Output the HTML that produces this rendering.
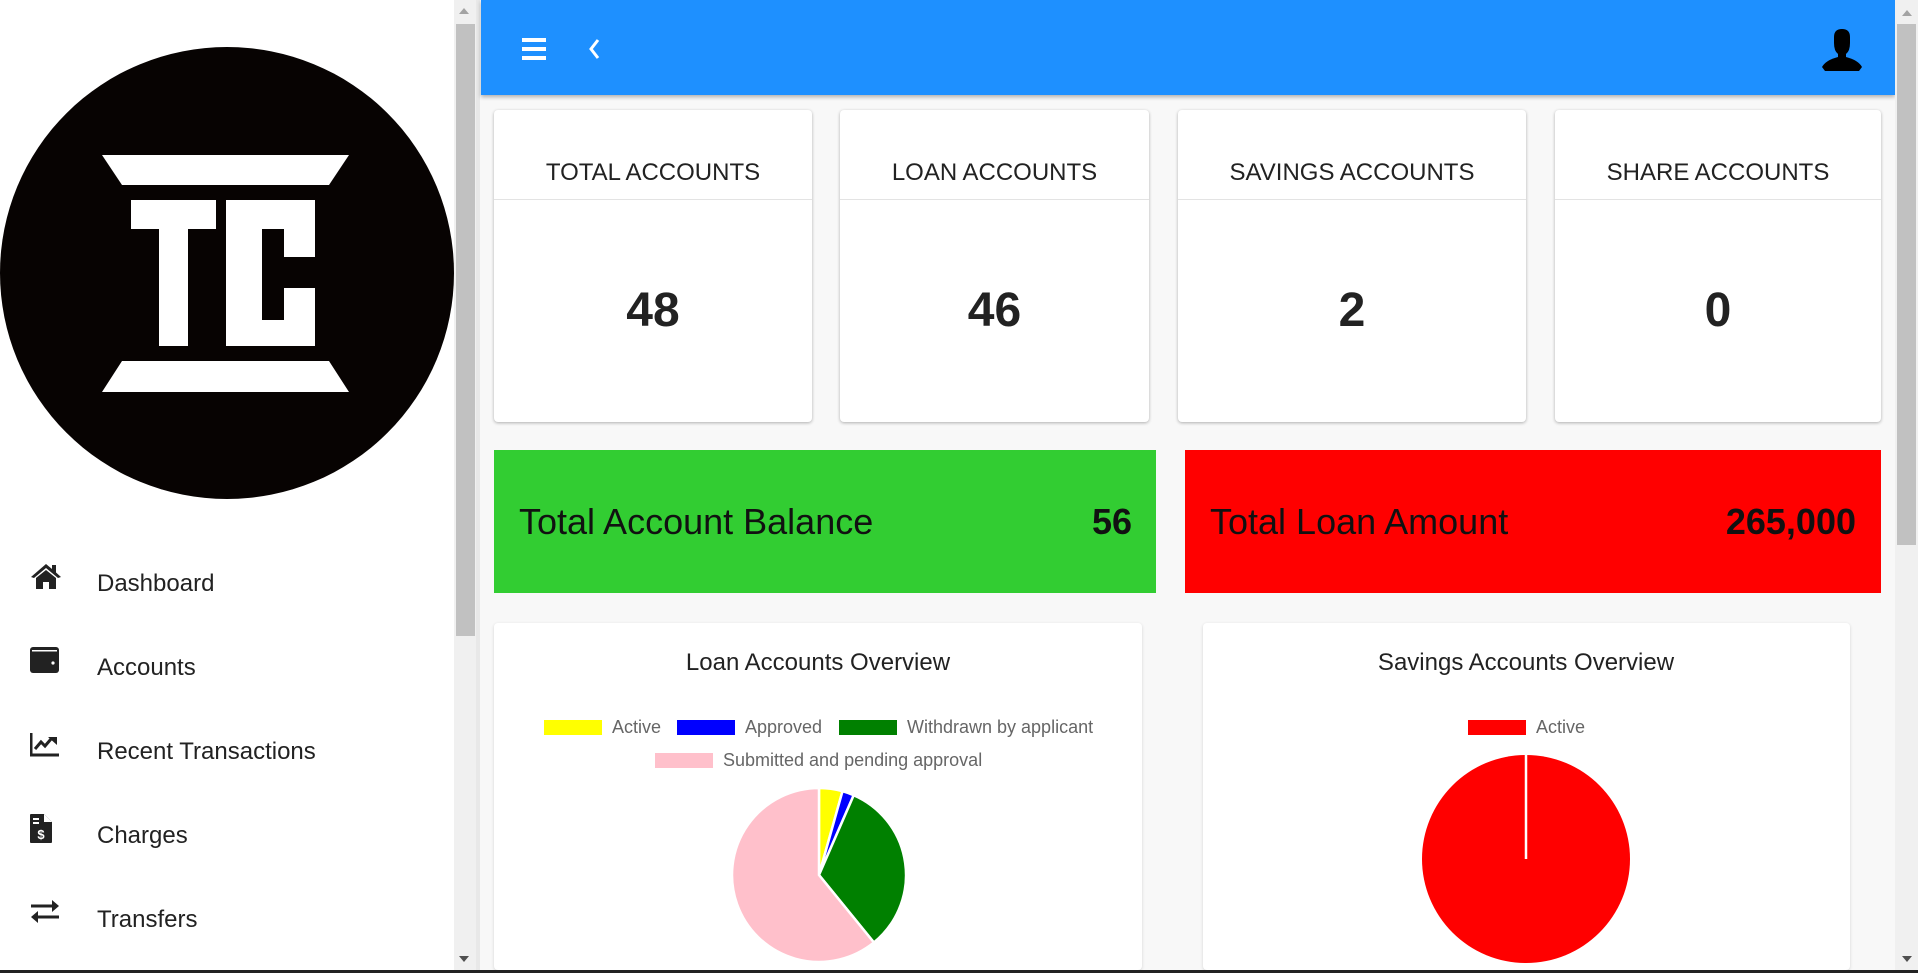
<!DOCTYPE html>
<html><head><meta charset="utf-8"><style>
*{margin:0;padding:0;box-sizing:border-box}
body{width:1918px;height:973px;overflow:hidden;background:#f8f8f8;font-family:"Liberation Sans",Arial,sans-serif;position:relative}
.abs{position:absolute}
.side{left:0;top:0;width:454px;height:973px;background:#fff}
.nav{position:absolute;left:97px;font-size:24px;color:#222;line-height:1}
.card{position:absolute;top:110px;height:312px;background:#fff;border-radius:4px;box-shadow:0 1px 3px rgba(0,0,0,.3)}
.card .t{position:absolute;top:0;left:0;right:0;height:90px;border-bottom:1px solid #e3e3e3;text-align:center;font-size:24px;color:#222;line-height:1;padding-top:51px}
.card .n{position:absolute;left:0;right:0;text-align:center;font-size:48px;font-weight:bold;color:#222;top:173px}
.box{position:absolute;top:450px;height:143px;font-size:36px;color:#111}
.box span{position:absolute;top:51px}
.chart{position:absolute;top:623px;height:347px;background:#fff;border-radius:4px;box-shadow:0 1px 3px rgba(0,0,0,.15)}
.ct{position:absolute;top:649px;font-size:24px;color:#222;transform:translateX(-50%);white-space:nowrap}
.lg{position:absolute;font-size:18px;color:#666;line-height:1}
.sw{position:absolute;height:15px;width:58px}
</style></head><body>
<div class="abs side"></div>
<svg class="abs" style="left:0;top:46px" width="454" height="454" viewBox="0 0 454 454">
<ellipse cx="227" cy="227" rx="227" ry="226" fill="#070302"/>
<polygon points="102,109 349,109 329,139 122,139" fill="#fff"/>
<polygon points="131,154 216,154 216,183 188,183 188,300 159,300 159,183 131,183" fill="#fff"/>
<polygon points="226,154 315,154 315,211 284,211 284,183 262,183 262,274 284,274 284,242 315,242 315,300 226,300" fill="#fff"/>
<polygon points="122,315 329,315 349,346 102,346" fill="#fff"/>
</svg>
<div class="abs" style="left:454px;top:0;width:22px;height:973px;background:#f0f0f0"></div>
<div class="abs" style="left:456px;top:24px;width:19px;height:612px;background:#c1c1c1"></div>
<div class="abs" style="left:459px;top:8px;width:0;height:0;border-left:5px solid transparent;border-right:5px solid transparent;border-bottom:6px solid #a3a3a3"></div>
<div class="abs" style="left:459px;top:956px;width:0;height:0;border-left:5px solid transparent;border-right:5px solid transparent;border-top:6px solid #505050"></div>
<div class="abs" style="left:476px;top:0;width:4px;height:973px;background:#e8e8e8"></div>
<svg class="abs" style="left:30px;top:563px" width="32" height="28" viewBox="0 0 32 28"><path d="M16 1 L1 14 L4 15 L16 5 L28 15 L31 14 L26 9.5 V2 H22 V6 Z M6 15 V26 H13 V19 H19 V26 H26 V15 L16 7 Z" fill="#222"/></svg>
<div class="nav" style="top:572px">Dashboard</div>
<svg class="abs" style="left:30px;top:647px" width="30" height="27" viewBox="0 0 30 27"><rect x="0" y="0" width="29" height="26" rx="3" fill="#222"/><rect x="2" y="3" width="25" height="1.5" fill="#fff"/><circle cx="23" cy="16" r="1.6" fill="#fff"/></svg>
<div class="nav" style="top:656px">Accounts</div>
<svg class="abs" style="left:30px;top:733px" width="30" height="24" viewBox="0 0 30 24"><path d="M1 0 V22 H29" stroke="#222" stroke-width="3" fill="none"/><path d="M5 16 L11 9 L15 13 L21 6" stroke="#222" stroke-width="3" fill="none"/><path d="M18 4 H27 V12 Z" fill="#222"/></svg>
<div class="nav" style="top:740px">Recent Transactions</div>
<svg class="abs" style="left:30px;top:814px" width="24" height="30" viewBox="0 0 24 30"><path d="M0 1 Q0 0 1 0 H14 L22 8 V28 Q22 29 21 29 H1 Q0 29 0 28 Z" fill="#222"/><path d="M14 0 V8 H22" fill="#fff"/><rect x="3" y="4" width="6" height="2" fill="#fff"/><rect x="3" y="8" width="6" height="2" fill="#fff"/><text x="11" y="25" font-size="13" font-weight="bold" fill="#fff" text-anchor="middle" font-family="Liberation Sans">$</text></svg>
<div class="nav" style="top:824px">Charges</div>
<svg class="abs" style="left:30px;top:900px" width="30" height="24" viewBox="0 0 30 24"><path d="M1 6 H24" stroke="#222" stroke-width="3"/><path d="M22 0 L29 6 L22 12 Z" fill="#222"/><path d="M6 17 H29" stroke="#222" stroke-width="3"/><path d="M8 11 L1 17 L8 23 Z" fill="#222"/></svg>
<div class="nav" style="top:908px">Transfers</div>
<div class="abs" style="left:481px;top:0;width:1414px;height:95px;background:#1e90ff;box-shadow:0 2px 4px rgba(0,0,0,.3)"></div>
<div class="abs" style="left:522px;top:38px;width:24px;height:4px;background:#fff"></div>
<div class="abs" style="left:522px;top:47px;width:24px;height:4px;background:#fff"></div>
<div class="abs" style="left:522px;top:56px;width:24px;height:4px;background:#fff"></div>
<svg class="abs" style="left:588px;top:38px" width="14" height="22" viewBox="0 0 14 22"><path d="M10 2 L3 11 L10 20" stroke="#fff" stroke-width="3" fill="none"/></svg>
<svg class="abs" style="left:1822px;top:29px" width="40" height="42" viewBox="0 0 40 42"><path d="M12 8 Q12 0 20 0 Q28 0 28 8 V14 Q28 22 24 25 V28 Q36 31 40 38 L37 42 H3 L0 38 Q4 31 16 28 V25 Q12 22 12 14 Z" fill="#000"/></svg>
<div class="abs" style="left:1895px;top:0;width:23px;height:973px;background:#f0f0f0"></div>
<div class="abs" style="left:1897px;top:24px;width:19px;height:521px;background:#c1c1c1"></div>
<div class="abs" style="left:1902px;top:10px;width:0;height:0;border-left:5px solid transparent;border-right:5px solid transparent;border-bottom:6px solid #a3a3a3"></div>
<div class="abs" style="left:1902px;top:956px;width:0;height:0;border-left:5px solid transparent;border-right:5px solid transparent;border-top:6px solid #505050"></div>
<div class="card" style="left:494px;width:318px"><div class="t">TOTAL ACCOUNTS</div><div class="n">48</div></div>
<div class="card" style="left:840px;width:309px"><div class="t">LOAN ACCOUNTS</div><div class="n">46</div></div>
<div class="card" style="left:1178px;width:348px"><div class="t">SAVINGS ACCOUNTS</div><div class="n">2</div></div>
<div class="card" style="left:1555px;width:326px"><div class="t">SHARE ACCOUNTS</div><div class="n">0</div></div>
<div class="box" style="left:494px;width:662px;background:#32cd32"><span style="left:25px">Total Account Balance</span><span style="right:24px;font-weight:bold">56</span></div>
<div class="box" style="left:1185px;width:696px;background:#ff0000"><span style="left:25px">Total Loan Amount</span><span style="right:25px;font-weight:bold">265,000</span></div>
<div class="chart" style="left:494px;width:648px"></div>
<div class="chart" style="left:1203px;width:647px"></div>
<div class="ct" style="left:818px">Loan Accounts Overview</div>
<div class="ct" style="left:1526px">Savings Accounts Overview</div>
<div class="sw" style="left:544px;top:720px;background:#ffff00"></div><div class="lg" style="left:612px;top:718px">Active</div>
<div class="sw" style="left:677px;top:720px;background:#0000ff"></div><div class="lg" style="left:745px;top:718px">Approved</div>
<div class="sw" style="left:839px;top:720px;background:#008000"></div><div class="lg" style="left:907px;top:718px">Withdrawn by applicant</div>
<div class="sw" style="left:655px;top:753px;background:#ffc0cb"></div><div class="lg" style="left:723px;top:751px">Submitted and pending approval</div>
<div class="sw" style="left:1468px;top:720px;background:#ff0000"></div><div class="lg" style="left:1536px;top:718px">Active</div>
<svg class="abs" style="left:0;top:0" width="1918" height="973">
<g stroke="#fff" stroke-width="2.5">
<path d="M819 875 L819 788 A87 87 0 0 1 842.5 791.2 Z" fill="#ffff00"/>
<path d="M819 875 L842.5 791.2 A87 87 0 0 1 853.7 795.2 Z" fill="#0000ff"/>
<path d="M819 875 L853.7 795.2 A87 87 0 0 1 873.9 942.5 Z" fill="#008000"/>
<path d="M819 875 L873.9 942.5 A87 87 0 1 1 819 788 Z" fill="#ffc0cb"/>
<circle cx="1526" cy="859" r="104" fill="#ff0000" stroke="none"/>
<path d="M1526 859 V755"/>
</g>
</svg>
<div class="abs" style="left:0;top:970px;width:1918px;height:3px;background:#222"></div>
</body></html>
